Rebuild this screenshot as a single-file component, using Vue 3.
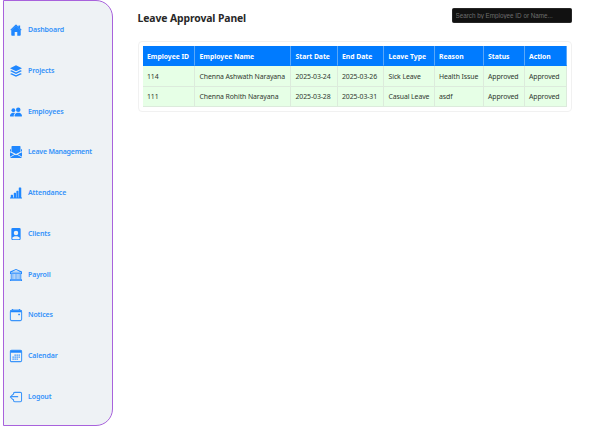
<script setup>
const items = ['Dashboard', 'Projects', 'Employees', 'Leave Management', 'Attendance', 'Clients', 'Payroll', 'Notices', 'Calendar', 'Logout']
const columns = ['Employee ID', 'Employee Name', 'Start Date', 'End Date', 'Leave Type', 'Reason', 'Status', 'Action']
const rows = [
  ['114', 'Chenna Ashwath Narayana', '2025-03-24', '2025-03-26', 'Sick Leave', 'Health Issue', 'Approved', 'Approved'],
  ['111', 'Chenna Rohith Narayana', '2025-03-28', '2025-03-31', 'Casual Leave', 'asdf', 'Approved', 'Approved'],
]
</script>

<template>
  <div class="page">
    <nav class="sidebar">
      <a v-for="name in items" :key="name" class="item">
        <svg class="icon" viewBox="0 0 16 16">
          <g v-if="name === 'Dashboard'">
            <path d="M8.700 1a1 1 0 0 0-1.400 0L.5 7.800l.9.9L8 2.200l6.600 6.500.9-.9L13.500 5.800V2h-2.300v1.500z" />
            <path d="M8 2 1.700 8.300v5.900c0 .8.600 1.400 1.400 1.400h3.200V10.500h3.400v5.100h3.200c.8 0 1.400-.6 1.400-1.400V8.300z" />
          </g>
          <g v-else-if="name === 'Projects'">
            <path d="M8 .3 0 4.300l8 3.900 8-3.900z" />
            <path d="m2.100 7.100-2.100 1 8 3.900 8-3.900-2.100-1L8 10z" />
            <path d="m2.100 10.900-2.100 1 8 3.900 8-3.900-2.100-1L8 13.800z" />
          </g>
          <g v-else-if="name === 'Employees'">
            <circle cx="11" cy="5" r="3" />
            <circle cx="4.500" cy="5.500" r="2.500" />
            <path d="M7 14s-1 0-1-1 1-4 5-4 5 3 5 4-1 1-1 1zM5.200 14A2 2 0 0 1 5 13c0-1.400.7-2.800 2-3.700A6 6 0 0 0 5 9c-4 0-5 3-5 4s1 1 1 1z" />
          </g>
          <g v-else-if="name === 'Leave Management'">
            <path d="M3 0h10a1 1 0 0 1 1 1v6.500L8 10.500 2 7.500V1a1 1 0 0 1 1-1z" />
            <path d="M1.300 3.800 0 5v2l1.300.8zM14.700 3.800 16 5v2l-1.300.8zM0 8.200l5.600 2.900L0 14.400zM16 8.200l-5.600 2.900L16 14.400zM6.600 11.600 8 12.300l1.400-.7 6.500 3.800c-.3.400-.8.600-1.400.6h-13c-.6 0-1.100-.2-1.400-.6z" />
          </g>
          <path v-else-if="name === 'Attendance'" d="M12.300.5h1.900a.8.8 0 0 1 .8.800V14h1v1.200H0V14h1v-3a.8.800 0 0 1 .8-.8h1.400a.8.800 0 0 1 .8.800v3h1V8.300a.8.800 0 0 1 .8-.8h1.400a.8.800 0 0 1 .8.800V14h.5V5.800a.8.800 0 0 1 .8-.8h1.100a.8.800 0 0 1 .8.800V14h.5V1.300a.8.800 0 0 1 .6-.8z" />
          <path v-else-if="name === 'Clients'" fill-rule="evenodd" d="M3.500 0h9A1.700 1.700 0 0 1 14.200 1.700v12.600a1.700 1.700 0 0 1-1.700 1.700h-9a1.700 1.700 0 0 1-1.700-1.700V1.700A1.700 1.700 0 0 1 3.500 0zM8 3.500a3 3 0 1 0 0 6 3 3 0 0 0 0-6zM3 13.800c0 .7.400 1.100 1 1.100h8c.6 0 1-.4 1-1.100v-.7c-.8-1.300-2.500-2.100-5-2.100s-4.200.8-5 2.100z" />
          <path v-else-if="name === 'Payroll'" fill-rule="evenodd" d="m8 0 8 3.400V6.800h-1v6.400h.5l.7 2.800H-.2l.7-2.800H1V6.800H0V3.400zM2.600 3.700h10.800L8 1.300zM1.200 4.700v1h13.600v-1zM2.200 6.800v6.400h1.200V6.800zm2.300 0v6.400h1.800V6.800zm2.800 0v6.400h1.400V6.800zm2.500 0v6.400h1.700V6.800zm2.800 0v6.400h1.200V6.800zM1.500 14.300l-.2.700h13.400l-.2-.7z" />
          <g v-else-if="name === 'Notices'">
            <path d="M2.800 0h1.400v1h7.600V0h1.400v1h.5A2.300 2.300 0 0 1 16 3.300V4.200H0v-.9A2.300 2.300 0 0 1 2.300 1h.5z" />
            <rect x=".5" y="1.800" width="15" height="13.700" rx="1.700" class="line" />
            <rect x="11" y="6.200" width="2.200" height="2" rx=".4" />
          </g>
          <g v-else-if="name === 'Calendar'">
            <path d="M2 0h12a2 2 0 0 1 2 2v1.800H0V2a2 2 0 0 1 2-2z" />
            <rect x=".5" y=".5" width="15" height="15" rx="1.600" class="line" />
            <path d="M6 6h1.700v1.700H6zM8.700 6h1.700v1.700H8.700zM11.400 6h1.700v1.700h-1.700zM3.300 8.700H5v1.700H3.300zM6 8.700h1.700v1.700H6zM8.700 8.700h1.700v1.700H8.700zM11.400 8.700h1.700v1.700h-1.700zM3.300 11.400H5v1.700H3.300zM6 11.400h1.700v1.700H6zM8.700 11.400h1.700v1.700H8.700z" />
          </g>
          <path v-else class="line" d="M4.700 4.200V3.500A1.700 1.700 0 0 1 6.400 1.800h7.300a1.700 1.700 0 0 1 1.700 1.700v9a1.700 1.700 0 0 1-1.700 1.700H6.400a1.700 1.700 0 0 1-1.700-1.700V11.500M3.600 4.800.4 8l3.200 3.200M.6 7.500h9.700" />
        </svg>
        <span class="label" :class="{ long: name.includes(' ') }">{{ name }}</span>
      </a>
    </nav>
    <main class="main">
      <header class="top">
        <h1 class="title">Leave Approval Panel</h1>
        <input class="search" type="text" placeholder="Search by Employee ID or Name..." />
      </header>
      <section class="card">
        <div class="grid head">
          <div v-for="c in columns" :key="c" class="cell"><span>{{ c }}</span></div>
        </div>
        <div v-for="r in rows" :key="r[0]" class="grid body">
          <div v-for="(v, i) in r" :key="i" class="cell"><span>{{ v }}</span></div>
        </div>
      </section>
    </main>
  </div>
</template>

<style>
body { margin: 0; background: #fff; overflow: hidden; }
</style>

<style scoped>
.page {
  display: flex;
  width: 602px;
  height: 426px;
  box-sizing: border-box;
  padding-left: 3px;
  font-family: "Noto Sans", sans-serif;
}
.sidebar {
  box-sizing: border-box;
  width: 110px;
  height: 426px;
  padding: 9px 0 8px 6px;
  display: grid;
  grid-template-rows: repeat(10, 1fr);
  background: #eef2f5;
  border: 1px solid #a862dc;
  border-radius: 0 17px 17px 0;
}
.item { display: flex; align-items: center; gap: 6px; color: #3291fa; }
.icon { width: 12px; height: 12px; flex: none; fill: #1f87ff; overflow: visible; }
.line { fill: none; stroke: #3b95fa; stroke-width: 1.400; stroke-linecap: round; stroke-linejoin: round; }
.label { font-size: 7px; font-weight: 600; line-height: 10px; letter-spacing: -0.130px; white-space: nowrap; }
.label.long { letter-spacing: -0.230px; }
.main { width: 434px; margin-left: 24.500px; }
.top { display: flex; justify-content: space-between; align-items: flex-start; height: 40.500px; box-sizing: border-box; padding-top: 8px; }
.title { margin: 3px 0 0; font-size: 10.400px; line-height: 15px; font-weight: 700; letter-spacing: -0.110px; color: #282828; white-space: nowrap; }
.search {
  box-sizing: border-box;
  width: 120px;
  height: 15px;
  padding: 0 3px;
  border: 1px solid #252525;
  border-radius: 1.500px;
  background: #111;
  color: #ddd;
  font: 6.300px "Liberation Sans", sans-serif;
}
.search::placeholder { color: #6e6e6e; opacity: 1; }
.card { box-sizing: border-box; height: 71px; padding: 4.500px 4px; border: 1px solid #f1f1f1; border-radius: 4px; }
.grid { display: grid; grid-template-columns: 52.500px 96px 46.500px 46.500px 50.500px 49px 41px 42px; height: 20.300px; }
.cell { box-sizing: border-box; display: flex; align-items: center; padding-left: 4.500px; padding-top: 1px; font-size: 6.900px; letter-spacing: -0.090px; white-space: nowrap; border-right: 1px solid #dcebdc; border-bottom: 1px solid #dcebdc; }
.head .cell { background: #007bff; color: #fff; font-weight: 700; font-size: 6.800px; letter-spacing: -0.020px; border-right-color: #5ba8f8; border-bottom-color: #007bff; }
.body .cell { background: #e6ffe6; color: #303830; }
</style>
